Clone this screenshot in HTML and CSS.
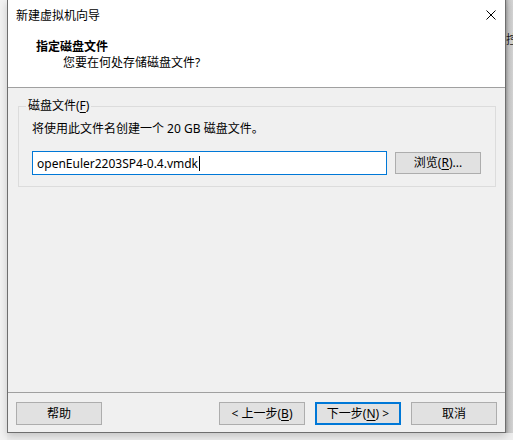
FILE: index.html
```html
<!DOCTYPE html>
<html lang="zh-CN">
<head>
<meta charset="utf-8">
<title>新建虚拟机向导</title>
<link rel="stylesheet" href="styles.css">
</head>
<body>
<div class="desk">
  <div class="gutter"></div>
  <div class="window">
    <div class="header">
      <div class="titlebar">
        <span class="title">新建虚拟机向导</span>
        <svg class="close" width="10" height="10" viewBox="0 0 10 10"><path d="M0.5 0.5L9.5 9.5M9.5 0.5L0.5 9.5" stroke="#000" stroke-width="1"/></svg>
      </div>
      <div class="heading">指定磁盘文件</div>
      <div class="subheading">您要在何处存储磁盘文件?</div>
    </div>
    <div class="main">
      <fieldset class="group">
        <legend class="legend">磁盘文件(<u>F</u>)</legend>
        <div class="info">将使用此文件名创建一个 20 GB 磁盘文件。</div>
        <div class="filerow">
          <div class="input"><span>openEuler2203SP4-0.4.vmdk</span><span class="caret"></span></div>
          <div class="btn browse">浏览(<u>R</u>)...</div>
        </div>
      </fieldset>
    </div>
    <div class="footer">
      <div class="btn">帮助</div>
      <div class="spacer"></div>
      <div class="btn">&lt; 上一步(<u>B</u>)</div>
      <div class="btn default">下一步(<u>N</u>) &gt;</div>
      <div class="btn">取消</div>
    </div>
  </div>
  <div class="behind"><span class="ghost">控</span></div>
</div>
</body>
</html>
```
FILE: styles.css
```css
html, body {
  margin: 0;
  padding: 0;
}
body {
  width: 513px;
  height: 440px;
  overflow: hidden;
  background: #eeeeee;
  font-family: "Noto Sans", "Noto Sans CJK SC", sans-serif;
  font-size: 12px;
  color: #000;
}
.desk {
  display: flex;
  height: 440px;
}
.gutter {
  width: 7px;
  flex: none;
  background: #f2f2f2;
}
.window {
  width: 497px;
  height: 432px;
  flex: none;
  border: 1px solid #6e6e6e;
  border-top: none;
  background: #f0f0f0;
  display: flex;
  flex-direction: column;
  box-shadow: 0 3px 8px rgba(0,0,0,0.18);
  position: relative;
  z-index: 1;
}
.behind {
  flex: 1;
  height: 433px;
  overflow: hidden;
  background: linear-gradient(to right, #a9a9a9, #c9c9c9 40%, #d4d4d4);
  padding-top: 31px;
  box-sizing: border-box;
  white-space: nowrap;
}
.ghost {
  display: block;
  font-family: "Noto Sans CJK SC", sans-serif;
  font-size: 12px;
  line-height: 16px;
  margin-left: 0;
  color: #1b1b1b;
}
.header {
  height: 87px;
  background: #fff;
  border-bottom: 1px solid #a0a0a0;
  flex: none;
}
.titlebar {
  height: 30px;
  display: flex;
  align-items: center;
  padding-left: 8px;
  padding-right: 9px;
}
.title {
  flex: 1;
  line-height: 16px;
  padding-top: 1px;
}
.close {
  display: block;
}
.heading {
  font-weight: bold;
  padding-left: 28px;
  line-height: 16px;
  margin-top: 9px;
}
.subheading {
  padding-left: 55px;
  line-height: 16px;
}
.main {
  flex: 1;
  padding: 10px 9px 0 10px;
}
.group {
  margin: 0;
  padding: 0 13px 11px 13px;
  border: 1px solid #dcdcdc;
  min-width: 0;
}
.legend {
  padding: 0 2px;
  margin-left: -6px;
  line-height: 16px;
}
.info {
  line-height: 16px;
  margin-top: 7px;
}
.filerow {
  display: flex;
  align-items: center;
  margin-top: 14px;
}
.input {
  width: 353px;
  height: 22px;
  border: 1px solid #0078d7;
  background: #fff;
  display: flex;
  align-items: center;
  padding-left: 4px;
  box-sizing: border-box;
  width: 355px;
  height: 24px;
}
.caret {
  width: 1px;
  height: 15px;
  background: #000;
  margin-left: 1px;
}
.btn {
  width: 86px;
  height: 23px;
  box-sizing: border-box;
  border: 1px solid #adadad;
  background: #e1e1e1;
  display: flex;
  align-items: center;
  justify-content: center;
  line-height: 16px;
  flex: none;
}
.browse {
  margin-left: 8px;
  height: 22px;
}
.footer {
  flex: none;
  border-top: 1px solid #a0a0a0;
  display: flex;
  padding: 9px 8px 7px 8px;
  gap: 10px;
}
.spacer {
  flex: 1;
}
.default {
  border: 2px solid #0078d7;
}
u {
  text-decoration: underline;
  text-underline-offset: 2px;
}
```
